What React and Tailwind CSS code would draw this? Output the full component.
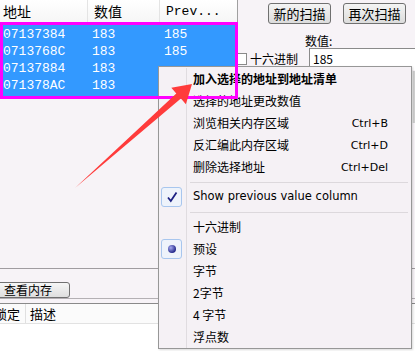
import React from 'react';

const rows = [
  ['07137384', '183', '185'],
  ['0713768C', '183', '185'],
  ['07137884', '183', ''],
  ['071378AC', '183', ''],
];

const MenuItem = ({ children, shortcut, bold, gutter, latin }) => (
  <div className="flex h-[22px]">
    <div className="w-[28px] shrink-0 border-r border-[#e0dce0] flex items-center">{gutter}</div>
    <div className="flex flex-1 items-center pl-[6px] pr-[23px]">
      <span
        className={`flex-1 leading-none ${bold ? 'font-bold' : ''} ${
          latin ? "font-['DejaVu_Sans'] text-[11.5px]" : 'text-[12px]'
        }`}
      >
        {children}
      </span>
      {shortcut && <span className="font-['DejaVu_Sans'] text-[11px] leading-none">{shortcut}</span>}
    </div>
  </div>
);

const Sep = () => (
  <div className="flex h-[8px]">
    <div className="w-[28px] shrink-0 border-r border-[#e0dce0]"></div>
    <div className="flex-1 flex items-center pl-[3px] pr-[3px]">
      <div className="h-[1px] w-full bg-[#dcd8dc]"></div>
    </div>
  </div>
);

const GutterBox = ({ children }) => (
  <div className="ml-[2px] w-[21px] h-[20px] rounded-[3px] border border-[#a8c6ee] bg-[#eef3fb] flex items-center justify-center">
    {children}
  </div>
);

const App = () => {
  return (
    <div className="relative w-[415px] h-[351px] overflow-hidden bg-[#f7f3f7] text-black font-['Noto_Sans_CJK_SC','Noto_Sans',sans-serif]">
      {/* top: result list + scan controls */}
      <div className="flex h-[269px] border-b border-[#a09ca0]">
        <div className="w-[238px] shrink-0 flex flex-col">
          <div className="flex h-[22px] bg-gradient-to-b from-white to-[#f6f6f6] border-r border-[#a0a0a0] items-center">
            <div className="w-[88px] h-full border-r border-[#e4e4e4] pl-[3px] flex items-center text-[14px] leading-none">地址</div>
            <div className="w-[72px] h-full border-r border-[#e4e4e4] pl-[6px] flex items-center text-[14px] leading-none">数值</div>
            <div className="flex-1 pl-[6px] font-['Liberation_Mono',monospace] text-[13px] leading-none">Prev...</div>
          </div>
          <div className="mt-[3px] pt-[1px] pb-[2px] w-[235px] bg-[#3399ff] text-white font-['Liberation_Mono',monospace] text-[13px]">
            {rows.map((r) => (
              <div key={r[0]} className="flex h-[17px] items-center leading-none">
                <span className="w-[92px] pl-[3px]">{r[0]}</span>
                <span className="w-[72px]">{r[1]}</span>
                <span>{r[2]}</span>
              </div>
            ))}
          </div>
        </div>
        <div className="flex-1 flex flex-col pt-[3px]">
          <div className="flex h-[21px] pl-[30px] gap-[12px]">
            <button className="w-[63px] h-[21px] rounded-[3px] border border-[#707070] bg-gradient-to-b from-[#f4f4f4] to-[#dcdcdc] text-[13px] leading-none">新的扫描</button>
            <button className="w-[63px] h-[21px] rounded-[3px] border border-[#707070] bg-gradient-to-b from-[#f4f4f4] to-[#dcdcdc] text-[13px] leading-none">再次扫描</button>
          </div>
          <div className="mt-[9px] h-[15px] pl-[67px] text-[12px] leading-none flex items-center">数值:</div>
          <div className="flex h-[22px]">
            <div className="-ml-[2px] mt-[5px] w-[11px] h-[12px] bg-white border border-[#8a8a8a]"></div>
            <span className="ml-[3px] mt-[5px] text-[12px] leading-none">十六进制</span>
            <div className="ml-[11px] flex-1 bg-white border-t border-l border-[#8a8a8a] pl-[3px] pt-[4px] text-[12px] leading-none">185</div>
          </div>
          <div className="ml-auto mt-[1px] w-[3px] h-[52px] bg-[#cfcfcf] border-l border-[#eaeaea]"></div>
        </div>
      </div>

      {/* toolbar with memory button */}
      <div className="h-[29px] pt-[7px]">
        <button className="-ml-[3px] w-[73px] h-[16px] rounded-[3px] border border-[#707070] bg-gradient-to-b from-[#f6f6f6] to-[#dedede] text-[12px] leading-none pl-[6px] text-left">查看内存</button>
      </div>
      <div className="h-[1px] bg-[#b4b0b4]"></div>
      <div className="h-[4px]"></div>
      <div className="flex h-[21px] border-t border-[#8a8a8a] border-b border-b-[#e2e2e2] bg-[#fbfbfb] items-center text-[13px] leading-none">
        <div className="w-[33px] h-full border-r border-[#e0e0e0] -ml-[7px] flex items-center justify-end pr-[5px]">锁定</div>
        <div className="pl-[4px]">描述</div>
      </div>
      <div className="h-[40px] bg-white"></div>

      {/* context menu */}
      <div className="absolute left-[158px] top-[66px] w-[254px] border border-[#979797] bg-[#f5f1f5] pt-[1px] shadow-[1px_1px_2px_rgba(0,0,0,0.15)]">
        <MenuItem bold>加入选择的地址到地址清单</MenuItem>
        <MenuItem>选择的地址更改数值</MenuItem>
        <MenuItem shortcut="Ctrl+B">浏览相关内存区域</MenuItem>
        <MenuItem shortcut="Ctrl+D">反汇编此内存区域</MenuItem>
        <MenuItem shortcut="Ctrl+Del">删除选择地址</MenuItem>
        <Sep />
        <MenuItem
          latin
          gutter={
            <GutterBox>
              <svg width="12" height="12" viewBox="0 0 12 12">
                <path d="M2 6.5 L4.8 10 L10.5 1.5" fill="none" stroke="#1d2182" strokeWidth="1.8" />
              </svg>
            </GutterBox>
          }
        >
          Show previous value column
        </MenuItem>
        <Sep />
        <MenuItem>十六进制</MenuItem>
        <MenuItem
          gutter={
            <GutterBox>
              <div className="w-[8px] h-[8px] rounded-full bg-[radial-gradient(circle_at_35%_35%,#a6abf0,#262a8c_70%)]"></div>
            </GutterBox>
          }
        >
          预设
        </MenuItem>
        <MenuItem>字节</MenuItem>
        <MenuItem>2字节</MenuItem>
        <MenuItem>4 字节</MenuItem>
        <MenuItem>浮点数</MenuItem>
      </div>

      {/* highlight annotation */}
      <div className="absolute left-0 top-[22px] w-[238px] h-[77px] border-[3px] border-[#ff00ff]"></div>
      <svg className="absolute left-0 top-0" width="415" height="351" viewBox="0 0 415 351">
        <polygon
          points="75,188 176.3,93.4 171.3,87.8 192,84 185.9,104.2 180.9,98.6"
          fill="#ff3b3b"
        />
      </svg>
    </div>
  );
};

export default App;
